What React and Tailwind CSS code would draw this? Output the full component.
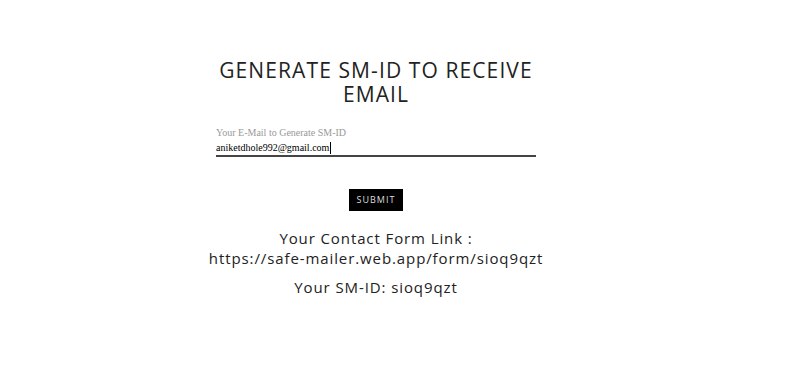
export default function App() {
  return (
    <div className="w-[806px] h-[366px] bg-white overflow-hidden">
      <div className="ml-[216px] w-[320px] flex flex-col items-center pt-[58px]">
        <h1 className="w-[340px] text-center text-[21px] leading-[24px] tracking-[1.1px] text-[#222] font-['Open_Sans',sans-serif] font-normal">
          GENERATE SM-ID TO RECEIVE EMAIL
        </h1>
        <div className="w-full mt-[21px] font-['Liberation_Serif',serif]">
          <div className="text-[10px] leading-[12px] text-[#999]">Your E-Mail to Generate SM-ID</div>
          <div className="mt-[2px] text-[10px] leading-[13px] text-black pb-[1px] border-b-2 border-[#444] flex items-center">
            aniketdhole992@gmail.com<span className="inline-block w-px h-[12px] bg-black ml-px"></span>
          </div>
        </div>
        <button className="mt-[32px] bg-black text-[#ddd] text-[9px] tracking-[1px] px-[8px] h-[22px] font-['Open_Sans',sans-serif]">
          SUBMIT
        </button>
        <div className="w-[400px] mt-[17px] text-center text-[15px] leading-[20px] tracking-[0.9px] text-[#222] font-['Open_Sans',sans-serif]">
          <div>Your Contact Form Link :</div>
          <div>https://safe-mailer.web.app/form/sioq9qzt</div>
          <div className="mt-[9px]">Your SM-ID: sioq9qzt</div>
        </div>
      </div>
    </div>
  );
}
